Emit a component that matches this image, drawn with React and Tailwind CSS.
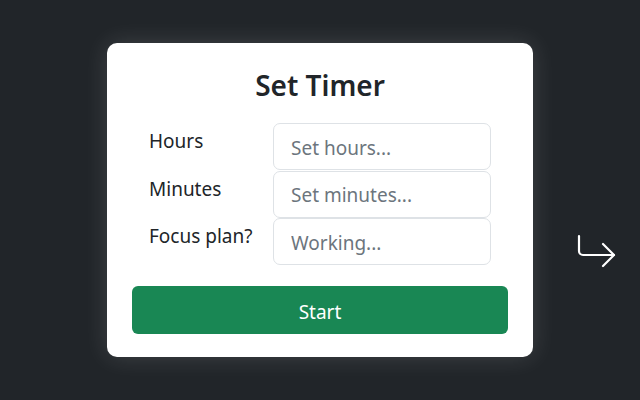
import { useState } from 'react'

function ReturnArrow() {
  return (
    <svg width="40" height="36" viewBox="0 0 40 36" fill="none" stroke="white" strokeWidth="2.2" strokeLinecap="round" strokeLinejoin="round">
      <path d="M3 3v15a4 4 0 0 0 4 4h31" />
      <path d="M27 11l11 11-11 11" />
    </svg>
  )
}

function Row({ label, placeholder, value, onChange }) {
  return (
    <div className="flex">
      <label className="w-[124px] text-[19px] leading-[30px] pt-[3px] text-[#212529]">{label}</label>
      <input
        className="w-[218px] h-[47px] border border-[#dee2e6] rounded-[7px] px-[17px] pt-[2px] text-[19px] text-[#212529] placeholder:text-[#6c757d] outline-none"
        placeholder={placeholder}
        value={value}
        onChange={e => onChange(e.target.value)}
      />
    </div>
  )
}

export default function App() {
  const [hours, setHours] = useState('')
  const [minutes, setMinutes] = useState('')
  const [plan, setPlan] = useState('')

  return (
    <div
      className="min-h-screen bg-[#212529] grid grid-cols-[1fr_426px_1fr] items-center"
      style={{ fontFamily: '"Noto Sans", "Open Sans", sans-serif' }}
    >
      <div />
      <div className="bg-white rounded-[10px] shadow-[0_0_24px_rgba(255,255,255,0.14)] px-[25px] pt-[26px] pb-[23px]">
        <h1 className="text-[28px] font-semibold text-center text-[#212529] leading-[1.2]">Set Timer</h1>
        <div className="w-[342px] mx-auto mt-[21px] flex flex-col gap-[0.5px]">
          <Row label="Hours" placeholder="Set hours..." value={hours} onChange={setHours} />
          <Row label="Minutes" placeholder="Set minutes..." value={minutes} onChange={setMinutes} />
          <Row label="Focus plan?" placeholder="Working..." value={plan} onChange={setPlan} />
        </div>
        <button className="mt-[21px] w-full h-[48px] pt-[3px] bg-[#198754] rounded-[6px] text-white text-[19px]">Start</button>
      </div>
      <div className="self-start mt-[233px] ml-[43px]">
        <ReturnArrow />
      </div>
    </div>
  )
}
